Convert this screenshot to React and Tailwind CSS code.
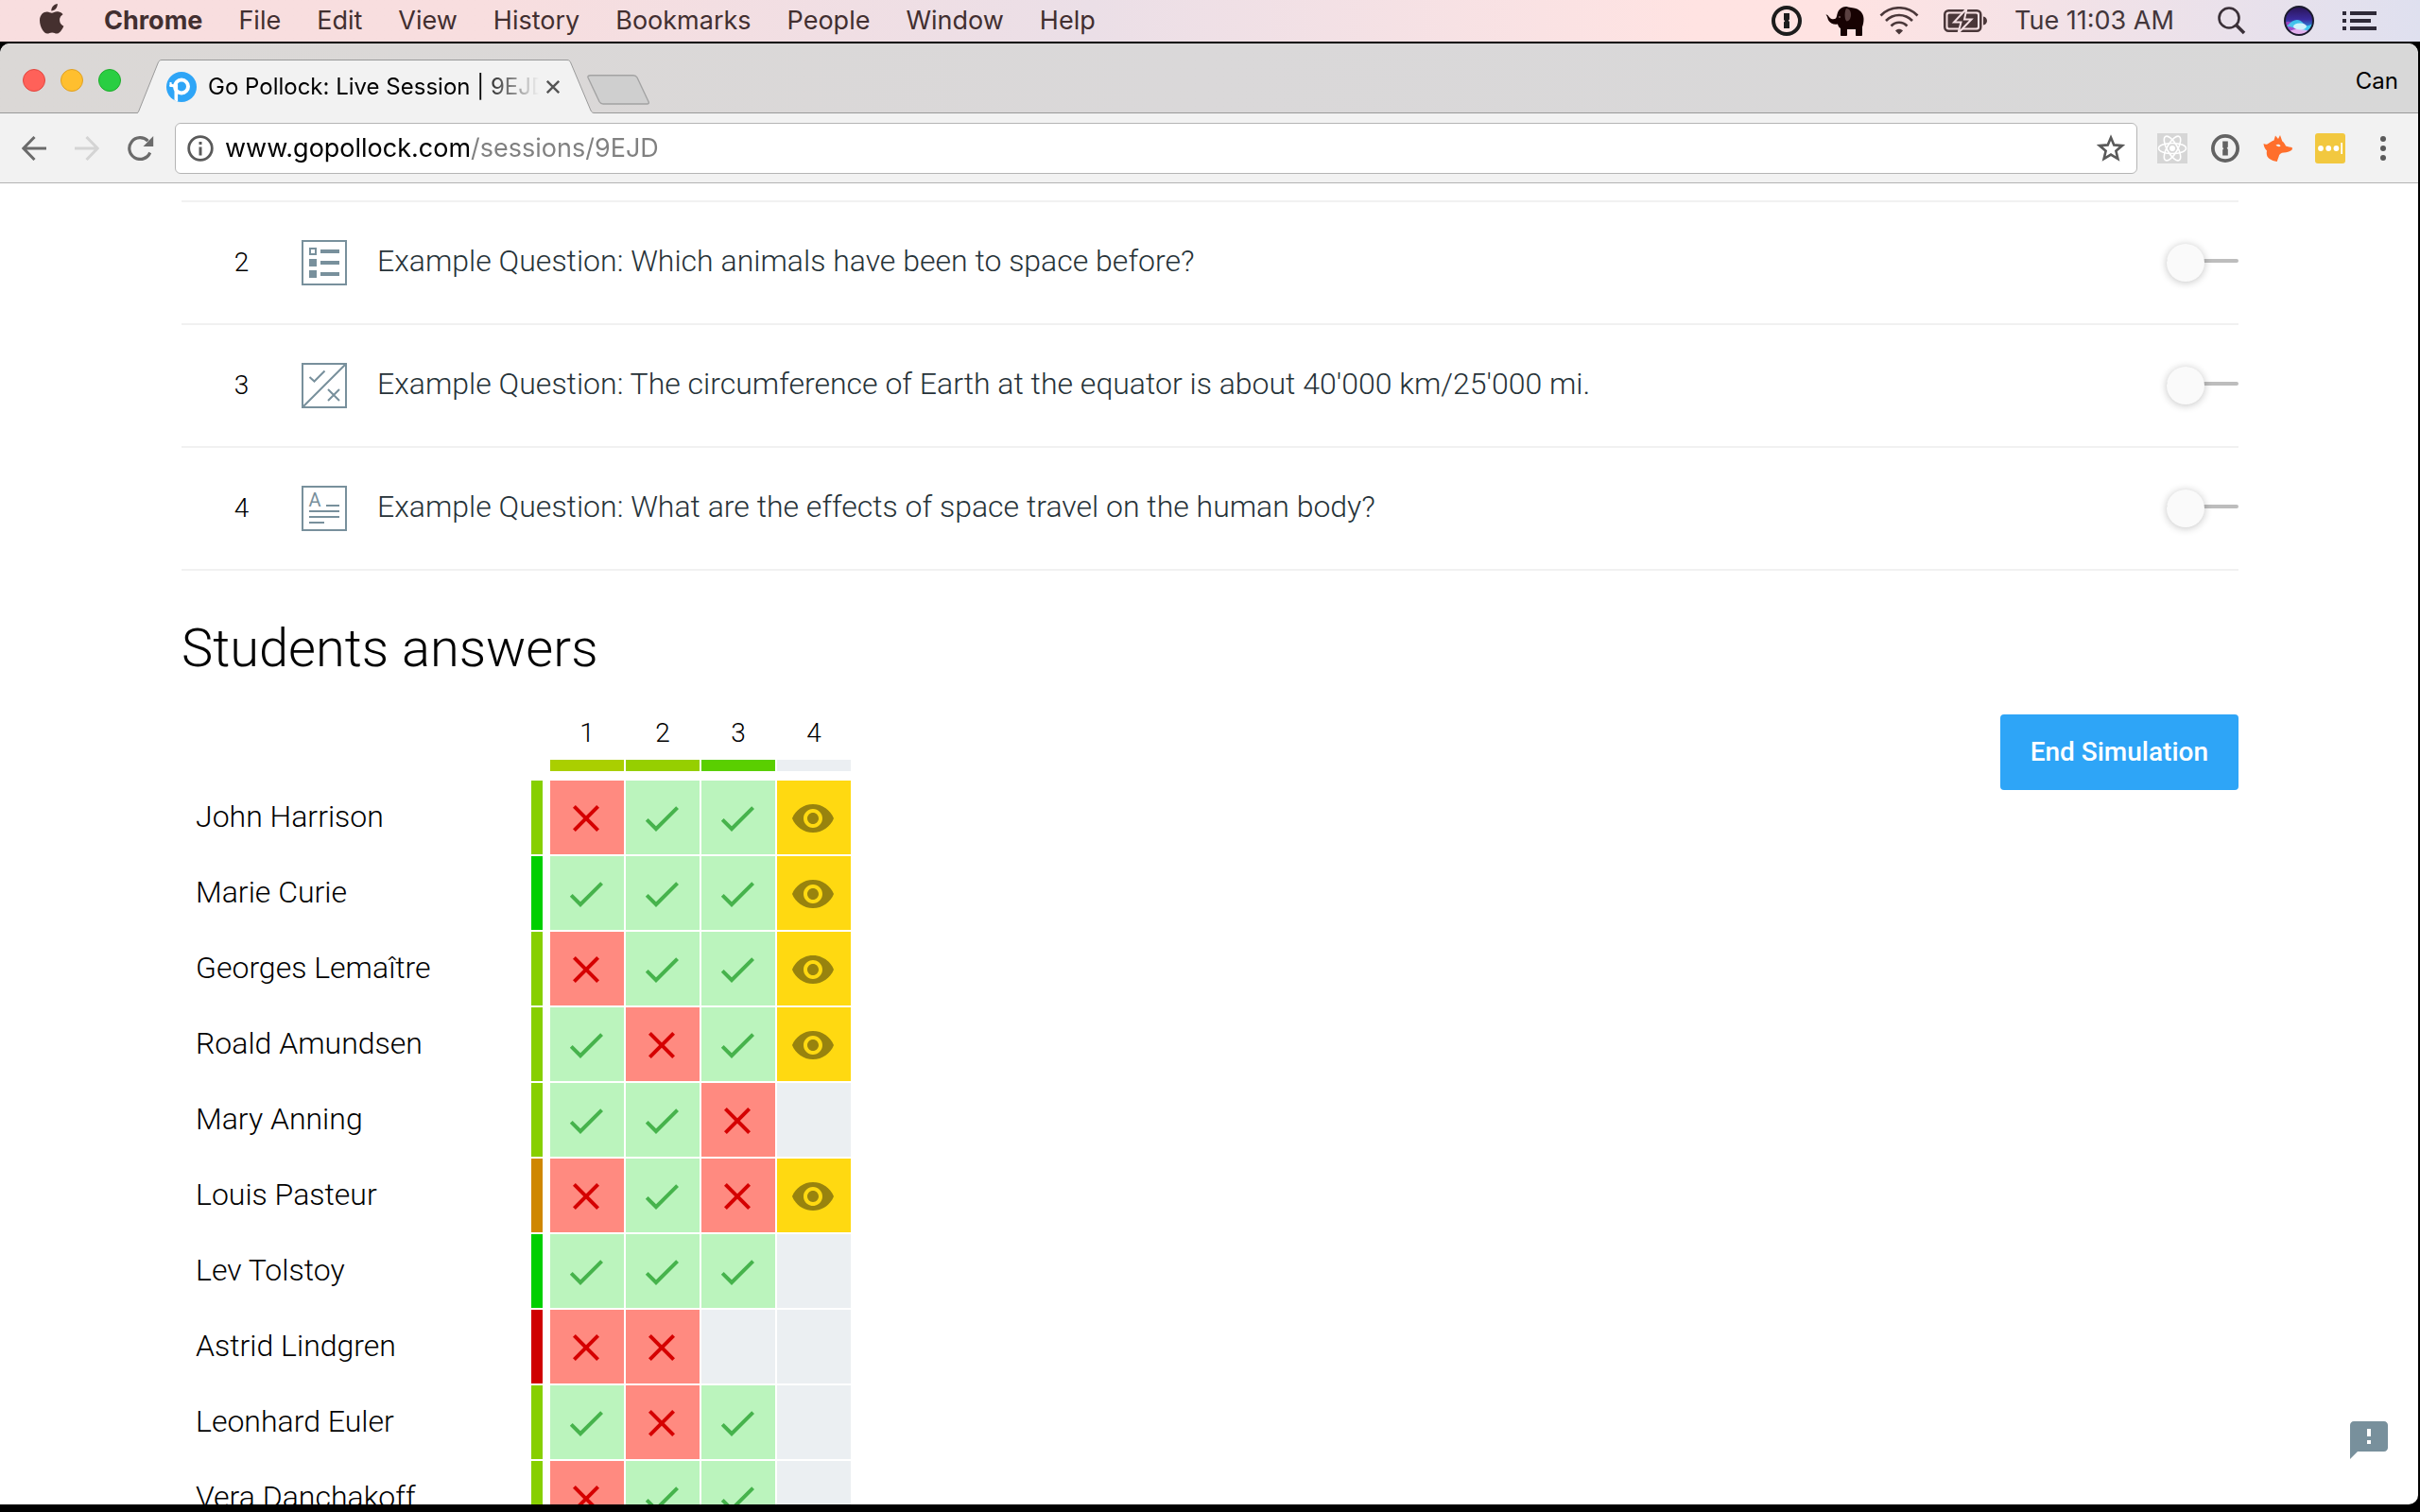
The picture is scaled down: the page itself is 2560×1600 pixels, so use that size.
import React from "react";

const MENUS = ["File", "Edit", "View", "History", "Bookmarks", "People", "Window", "Help"];

const QUESTIONS = [
  { number: 2, kind: "choice", text: "Example Question: Which animals have been to space before?" },
  { number: 3, kind: "truefalse", text: "Example Question: The circumference of Earth at the equator is about 40'000 km/25'000 mi." },
  { number: 4, kind: "text", text: "Example Question: What are the effects of space travel on the human body?" },
];

const COLUMNS = [
  { number: 1, bar: "bg-[#aacf00]" },
  { number: 2, bar: "bg-[#96cf00]" },
  { number: 3, bar: "bg-[#5acf00]" },
  { number: 4, bar: "bg-[#ebeff2]" },
];

/* One letter per cell: c correct, w wrong, s submitted, - no answer. */
const STUDENTS = [
  { name: "John Harrison", bar: "bg-[#87cf00]", answers: "wccs" },
  { name: "Marie Curie", bar: "bg-[#00cf00]", answers: "cccs" },
  { name: "Georges Lemaître", bar: "bg-[#87cf00]", answers: "wccs" },
  { name: "Roald Amundsen", bar: "bg-[#87cf00]", answers: "cwcs" },
  { name: "Mary Anning", bar: "bg-[#87cf00]", answers: "ccw-" },
  { name: "Louis Pasteur", bar: "bg-[#cf8700]", answers: "wcws" },
  { name: "Lev Tolstoy", bar: "bg-[#00cf00]", answers: "ccc-" },
  { name: "Astrid Lindgren", bar: "bg-[#cf0000]", answers: "ww--" },
  { name: "Leonhard Euler", bar: "bg-[#87cf00]", answers: "cwc-" },
  { name: "Vera Danchakoff", bar: "bg-[#87cf00]", answers: "wcc-" },
];

function AppleIcon() {
  return (
    <svg viewBox="0 0 26 32" className="h-8 w-[26px]" fill="#45302f" aria-hidden="true">
      <path d="M18.8 0c.2 2-.6 3.900-1.800 5.300-1.200 1.400-3 2.300-4.700 2.200-.2-1.900.7-3.800 1.800-5.100C15.300 1.100 17.200.1 18.800 0z" />
      <path d="M24.600 11.200c-.2.1-3.500 2-3.500 6 0 4.600 4.100 6.200 4.200 6.200 0 .1-.6 2.200-2.200 4.400-1.300 1.900-2.700 3.800-4.900 3.800s-2.700-1.200-5.100-1.200c-2.400 0-3.200 1.200-5.100 1.200-2 0-3.500-1.800-5-3.900C1.300 25.200 0 21.300 0 17.600c0-6 3.900-9.200 7.800-9.200 2.100 0 3.800 1.300 5.100 1.300 1.200 0 3.200-1.400 5.500-1.400.9 0 4.100.1 6.200 2.900z" />
    </svg>
  );
}

function KeyholeIcon({ color, className, ring }) {
  return (
    <svg viewBox="0 0 32 32" className={className} aria-hidden="true">
      <circle cx="16" cy="16" r="14" fill="none" stroke={color} strokeWidth={ring} />
      <path fill={color} d="M13 8h6v6.500l-1.200 1.300 1.200 1.200V24h-6v-6.500l1.200-1.300-1.200-1.200z" />
    </svg>
  );
}

function ElephantIcon() {
  return (
    <svg viewBox="0 0 41 31" className="h-[31px] w-[41px]" aria-hidden="true">
      <path fill="#170202" d="M.5 8.500C2 8 3 9.500 4 11c1.500 2 4.500 3.200 7 1.500C12.500 11 12 6 15 3c2.500-2.500 6-3.500 9-2.500 2 .5 4 .7 6 1 6 .8 10.500 5.500 10.500 11.500 0 3-.5 6-1.500 8.500V30c0 .7-.5 1-1 1h-5c-.7 0-1-.4-1-1v-6h-9v6c0 .7-.5 1-1 1h-5c-.7 0-1-.4-1-1v-7c-1.500-1-2.500-2.500-3-4.500-4 .7-7.500-.5-9.500-3.500C2 12.500 2.500 10.500.5 8.500z" />
      <path fill="#5a4040" d="M22 2c3.500 0 5 3 5 6.500 0 4-2 7-4.500 7C20 14 20 5 22 2z" />
      <circle cx="15" cy="11" r="1" fill="#7a6060" />
    </svg>
  );
}

function WifiIcon() {
  return (
    <svg viewBox="0 0 42 30" className="h-[30px] w-[42px]" fill="none" stroke="#4a3739" strokeWidth="2.600" aria-hidden="true">
      <path d="M1.500 9.500C12-1.500 30-1.500 40.500 9.500" />
      <path d="M7 15c8-8 20-8 28 0" />
      <path d="M12.500 20.500c5-5 12-5 17 0" />
      <path d="M21 29.500l-4-4c2-2.200 6-2.200 8 0z" fill="#4a3739" stroke="none" />
    </svg>
  );
}

function BatteryIcon() {
  return (
    <svg viewBox="0 0 46 26" className="h-[26px] w-[46px]" aria-hidden="true">
      <rect x="1.250" y="2.250" width="38" height="21.500" rx="4" fill="none" stroke="#4a3739" strokeWidth="2.500" />
      <rect x="4.500" y="5.500" width="31.500" height="15" rx="1.500" fill="#4a3739" />
      <path d="M42 8.500c2.500.5 4 2.300 4 4.500s-1.500 4-4 4.500z" fill="#4a3739" />
      <path d="M24.500 0L11 14.500h7.500L15.500 26 29.500 11.500H22z" fill="#4a3739" stroke="#f5e0e4" strokeWidth="2" />
    </svg>
  );
}

function SearchIcon() {
  return (
    <svg viewBox="0 0 30 30" className="h-[30px] w-[30px]" fill="none" stroke="#3a3038" aria-hidden="true">
      <circle cx="12" cy="12" r="10.500" strokeWidth="2.600" />
      <path d="M19.500 19.500L28 28" strokeWidth="3.600" />
    </svg>
  );
}

function SiriIcon() {
  return (
    <svg viewBox="0 0 32 32" className="h-8 w-8" aria-hidden="true">
      <defs>
        <linearGradient id="siri-sky" x1="0" y1="0" x2="0" y2="1">
          <stop offset="0" stopColor="#2a1455" />
          <stop offset=".45" stopColor="#3a2a9c" />
          <stop offset=".7" stopColor="#2f7fd6" />
          <stop offset="1" stopColor="#8a5ad0" />
        </linearGradient>
        <clipPath id="siri-disc"><circle cx="16" cy="16" r="14.500" /></clipPath>
      </defs>
      <circle cx="16" cy="16" r="15" fill="url(#siri-sky)" />
      <g clipPath="url(#siri-disc)">
        <path d="M1 18c5-3 8 0 11 4s10 8 20 2v9H1z" fill="#c23ec8" opacity=".7" />
        <path d="M3 22c6-8 13-9 17-4s6 3 11 1c-3 7-9 9-14 7S8 22 3 22z" fill="#3fd6f5" opacity=".85" />
        <ellipse cx="17" cy="22" rx="7" ry="3.500" fill="#fff" opacity=".75" />
        <path d="M6 27c6-3 14-3 20 0l-4 4H10z" fill="#f0c8f5" opacity=".8" />
      </g>
      <circle cx="16" cy="16" r="15" fill="none" stroke="#1a1a2c" strokeWidth="2" />
    </svg>
  );
}

function ListIcon() {
  return (
    <svg viewBox="0 0 36 20" className="h-5 w-9" fill="#2e2a38" aria-hidden="true">
      <path d="M0 0h4v4H0zM8 0h28v4H8zM0 8h4v4H0zM8 8h22v4H8zM0 16h4v4H0zM8 16h28v4H8z" />
    </svg>
  );
}

function MenuBar() {
  return (
    <header className="flex h-11 shrink-0 items-center justify-between bg-linear-to-r from-[#f8dedf] from-20% via-[#ebdfe7] via-45% to-[#ffe3e2] to-70% pl-[42px] font-['Inter',sans-serif] text-[27px] leading-8 text-[#422f30]">
      <nav className="flex items-center gap-[38px]">
        <button type="button" aria-label="Apple menu" className="mr-1 -mt-1"><AppleIcon /></button>
        <button type="button" className="font-bold">Chrome</button>
        {MENUS.map((m) => (
          <button type="button" key={m}>{m}</button>
        ))}
      </nav>
      <div className="flex h-full items-center bg-linear-to-r from-[#ffe3e2] from-10% to-[#dfe0ef] pr-[46px] text-[#43363a]">
        <KeyholeIcon color="#1c1c1c" ring="4" className="h-8 w-8" />
        <span className="ml-[25px]"><ElephantIcon /></span>
        <span className="ml-4"><WifiIcon /></span>
        <span className="ml-[26px]"><BatteryIcon /></span>
        <time className="ml-[29px] w-[173px] whitespace-nowrap">Tue 11:03 AM</time>
        <button type="button" aria-label="Spotlight" className="ml-[42px]"><SearchIcon /></button>
        <button type="button" aria-label="Siri" className="ml-10"><SiriIcon /></button>
        <button type="button" aria-label="Notification Center" className="ml-[30px]"><ListIcon /></button>
      </div>
    </header>
  );
}

function Favicon() {
  return (
    <svg viewBox="0 0 32 32" className="h-8 w-8 shrink-0" aria-hidden="true">
      <defs><clipPath id="favicon-disc"><circle cx="16" cy="16" r="16" /></clipPath></defs>
      <circle cx="16" cy="16" r="16" fill="#2ea5f7" />
      <g clipPath="url(#favicon-disc)" fill="none" stroke="#fff">
        <circle cx="16" cy="15.500" r="7" strokeWidth="4" />
        <path d="M10.300 14v18" strokeWidth="3.600" />
        <path d="M4 13.500c2.500 2 5.500 1.500 7-1" strokeWidth="3" />
        <path d="M4.500 11v5" strokeWidth="2" />
      </g>
    </svg>
  );
}

function TabStrip() {
  return (
    <div className="flex h-[74px] items-end rounded-t-[10px] border-b border-[#999] bg-linear-to-r from-[#dbd8d6] via-[#dad8d9] to-[#d8d8d8]">
      <div className="flex w-[145px] gap-4 self-center pt-1 pl-6">
        <button type="button" aria-label="Close window" className="h-6 w-6 rounded-full border border-[#e2463f] bg-[#ff6159]" />
        <button type="button" aria-label="Minimize window" className="h-6 w-6 rounded-full border border-[#dfa023] bg-[#ffbf2f]" />
        <button type="button" aria-label="Zoom window" className="h-6 w-6 rounded-full border border-[#1dad2b] bg-[#29ce42]" />
      </div>
      <div className="relative -mb-px flex h-[57px] w-[484px] items-center pr-9 pl-[31px]">
        <svg viewBox="0 0 484 57" preserveAspectRatio="none" className="absolute inset-0 h-full w-full" aria-hidden="true">
          <path d="M0 57C1 56.500 1 56 2 54L22 4C23 1.500 24 .5 26 .5H455C457 .5 458 1.500 459 4L480 54C481 56 482 56.500 484 56.500V57z" fill="#f2f2f2" />
          <path d="M0 56.500C1 56.500 1 56 2 54L22 4C23 1.500 24 .5 26 .5H455C457 .5 458 1.500 459 4L480 54C481 56 482 56.500 484 56.500" fill="none" stroke="#999" />
        </svg>
        <span className="relative"><Favicon /></span>
        <span className="relative ml-3 w-[350px] overflow-hidden bg-linear-to-r from-black from-82% to-transparent to-100% bg-clip-text font-['Inter',sans-serif] text-[24px] leading-8 whitespace-nowrap text-transparent">Go Pollock: Live Session | 9EJD</span>
        <button type="button" aria-label="Close tab" className="relative ml-2">
          <svg viewBox="0 0 14 14" className="h-3.5 w-3.5" stroke="#555" strokeWidth="2.400" aria-hidden="true"><path d="M.8.8l12.400 12.400M13.200.8L.8 13.200" /></svg>
        </button>
      </div>
      <button type="button" aria-label="New tab" className="mb-2 -ml-2">
        <svg viewBox="0 0 66 32" className="h-8 w-[66px]" aria-hidden="true">
          <path d="M3.500.7H49c2 0 3 .5 4 2.300l12 25.500c.7 1.500.3 2.500-1.500 2.500H17c-2 0-3-.7-4-2.500L1.200 3.500C.4 1.700 1.300.7 3.500.7z" fill="#cfcfcf" stroke="#a3a3a3" strokeWidth="1.400" />
        </svg>
      </button>
      <button type="button" className="mr-[21px] mb-[17px] ml-auto font-['Inter',sans-serif] text-[24px] leading-8 text-black">Can</button>
    </div>
  );
}

function Toolbar() {
  return (
    <div className="flex h-[74px] items-center border-b border-[#b3b3b3] bg-[#f2f2f2] pr-[34px] pl-[23px]">
      <button type="button" aria-label="Back">
        <svg viewBox="0 0 26 26" className="h-[26px] w-[26px]" fill="none" stroke="#6b6b6b" strokeWidth="3" aria-hidden="true"><path d="M26 13H2M13.500 1L1.800 13l11.700 12" /></svg>
      </button>
      <button type="button" aria-label="Forward" className="ml-[30px]">
        <svg viewBox="0 0 26 26" className="h-[26px] w-[26px]" fill="none" stroke="#d4d4d4" strokeWidth="3" aria-hidden="true"><path d="M0 13h24M12.500 1l11.700 12-11.700 12" /></svg>
      </button>
      <button type="button" aria-label="Reload" className="ml-[30px]">
        <svg viewBox="0 0 28 26" className="h-[26px] w-7" aria-hidden="true">
          <path d="M23.700 17.500A11.400 11.400 0 1 1 21.500 5.200" fill="none" stroke="#6b6b6b" strokeWidth="3.200" />
          <path d="M27.200 0v11H16.500z" fill="#6b6b6b" />
        </svg>
      </button>
      <div className="ml-[22px] flex h-[54px] flex-1 items-center rounded-md border border-[#b5b5b5] bg-white pr-3 pl-3">
        <svg viewBox="0 0 28 28" className="h-7 w-7 shrink-0" fill="none" stroke="#5a5a5a" strokeWidth="3" aria-hidden="true">
          <circle cx="14" cy="14" r="12.300" strokeWidth="2.800" />
          <path d="M14 7v3M14 12.500v9" />
        </svg>
        <input
          type="text"
          aria-label="Address"
          defaultValue="www.gopollock.com/sessions/9EJD"
          className="ml-3 min-w-0 flex-1 bg-linear-to-r from-black from-[258px] to-[#808080] to-[258px] bg-clip-text font-['Inter',sans-serif] text-[27px] leading-9 text-transparent caret-black outline-none"
        />
        <button type="button" aria-label="Bookmark this page">
          <svg viewBox="0 0 30 29" className="h-[29px] w-[30px]" fill="none" stroke="#5a5a5a" strokeWidth="2.600" aria-hidden="true"><path d="M15 3.500l3.300 7.900 8.600.7-6.500 5.600 2 8.400-7.400-4.500-7.400 4.500 2-8.400-6.500-5.600 8.600-.7z" /></svg>
        </button>
      </div>
      <button type="button" aria-label="React developer tools" className="ml-[21px]">
        <svg viewBox="0 0 32 32" className="h-8 w-8" aria-hidden="true">
          <rect width="32" height="32" fill="#d6d6d6" />
          <g fill="none" stroke="#fff" strokeWidth="1.600">
            <ellipse cx="16" cy="16" rx="14.500" ry="5.500" />
            <ellipse cx="16" cy="16" rx="14.500" ry="5.500" transform="rotate(60 16 16)" />
            <ellipse cx="16" cy="16" rx="14.500" ry="5.500" transform="rotate(120 16 16)" />
          </g>
          <circle cx="16" cy="16" r="3" fill="#fff" />
        </svg>
      </button>
      <button type="button" aria-label="Password manager" className="ml-[25px]"><KeyholeIcon color="#636363" ring="4" className="h-[30px] w-[30px]" /></button>
      <button type="button" aria-label="Fox extension" className="ml-[25px]">
        <svg viewBox="0 0 31 28" className="h-7 w-[31px]" aria-hidden="true">
          <path fill="#ff6f2c" d="M11.500 5.500L13 .5l3 3.500L18 0l2.300 6.500c1.500 1 2.700 2.500 3.700 5 2 .7 5 1.200 6.500 1.500.7 1 .5 2-.5 3-2 1.800-5 2.300-8 2.500-3 .2-5 1.500-5.500 4.500L14.700 28c-3-.3-5.800-1.500-8-3C4 23 3.300 20 4 16.500 2 14.500.8 12.500.5 9c2 1 3 1 4.500.2 2-1 4-2.700 6.500-3.700z" />
          <path fill="#f2f2f2" d="M13.500 10.500c2-1.200 4-1 5 .8-.7 1.200-3 1.300-5-.8z" />
        </svg>
      </button>
      <button type="button" aria-label="Passwords" className="ml-6">
        <svg viewBox="0 0 32 32" className="h-8 w-8" aria-hidden="true">
          <rect width="32" height="32" rx="3" fill="#f2c83f" />
          <g fill="#fff"><circle cx="6" cy="16" r="2.900" /><circle cx="14.200" cy="16" r="2.900" /><circle cx="22.400" cy="16" r="2.900" /><path d="M27.300 10H29v12h-1.700z" /></g>
        </svg>
      </button>
      <button type="button" aria-label="Chrome menu" className="ml-[37px]">
        <svg viewBox="0 0 6 26" className="h-[26px] w-1.5" fill="#5a5a5a" aria-hidden="true"><circle cx="3" cy="3" r="3" /><circle cx="3" cy="13" r="3" /><circle cx="3" cy="23" r="3" /></svg>
      </button>
    </div>
  );
}

function QuestionIcon({ kind }) {
  return (
    <svg viewBox="0 0 48 48" className="h-12 w-12" fill="none" stroke="#78909c" strokeWidth="2" aria-hidden="true">
      <rect x="1" y="1" width="46" height="46" />
      {kind === "choice" && (
        <>
          <rect x="9" y="9" width="6" height="6" />
          <path stroke="none" fill="#78909c" d="M8 20h8v8H8zM8 32h8v8H8zM20 10h20v4H20zM20 22h20v4H20zM20 34h20v4H20z" />
        </>
      )}
      {kind === "truefalse" && <path d="M1 47L47 1M8.500 15l5 4.500 11-11M28 28l12 12M40 28L28 40" />}
      {kind === "text" && (
        <>
          <text x="7.500" y="22" fill="#78909c" stroke="none" className="font-['Roboto',sans-serif] text-[20px]">A</text>
          <path d="M26 21h14M8 27h32M8 33h32M8 39h16" />
        </>
      )}
    </svg>
  );
}

function QuestionRow({ number, kind, text }) {
  const id = `question-${number}`;
  return (
    <li className="flex h-[130px] items-center border-b-2 border-[#f1f1f1]">
      <span className="w-[127px] text-center text-[28px] leading-8 font-light text-black">{number}</span>
      <QuestionIcon kind={kind} />
      <label htmlFor={id} className="ml-8 flex-1 pb-1 text-[32px] leading-10 font-light text-[#263238]">{text}</label>
      <span className="relative flex h-10 w-[76px] items-center">
        <span className="mb-1 h-1 w-full rounded-sm bg-[#bdbdbd]" />
        <span className="absolute left-0 h-10 w-10 rounded-full bg-[#fafafa] shadow-[0_1px_8px_rgba(0,0,0,0.24)]" />
        <input id={id} type="checkbox" role="switch" className="absolute inset-0 cursor-pointer opacity-0" />
      </span>
    </li>
  );
}

const ANSWERS = {
  c: { label: "Correct", cell: "bg-[#bbf4bd]", fill: "#46b34c", d: "M9 16.170L4.830 12l-1.420 1.410L9 19 21 7l-1.410-1.410z" },
  w: { label: "Wrong", cell: "bg-[#ff8a80]", fill: "#d50000", d: "M19 6.410L17.590 5 12 10.590 6.410 5 5 6.410 10.590 12 5 17.590 6.410 19 12 13.410 17.590 19 19 17.590 13.410 12z" },
  s: { label: "Submitted", cell: "bg-[#ffd911]", fill: "#98830e", d: "M12 4.500C7 4.500 2.730 7.610 1 12c1.730 4.390 6 7.500 11 7.500s9.270-3.110 11-7.500c-1.730-4.390-6-7.500-11-7.500zM12 17c-2.760 0-5-2.240-5-5s2.240-5 5-5 5 2.240 5 5-2.240 5-5 5zm0-8c-1.660 0-3 1.340-3 3s1.340 3 3 3 3-1.340 3-3-1.340-3-3-3z" },
};

function AnswerCell({ answer }) {
  const a = ANSWERS[answer];
  return (
    <td className="p-0 pr-0.5 pb-0.5">
      <div className={`h-[78px] w-[78px] pt-4 pl-3.5 ${a ? a.cell : "bg-[#ebeff2]"}`}>
        {a && (
          <svg viewBox="0 0 24 24" className="h-12 w-12" fill={a.fill} role="img" aria-label={a.label}><path d={a.d} /></svg>
        )}
      </div>
    </td>
  );
}

function AnswerTable() {
  return (
    <table className="border-separate border-spacing-0">
      <thead>
        <tr>
          <td className="w-[370px] p-0" />
          <td className="p-0" />
          {COLUMNS.map((c) => (
            <th key={c.number} scope="col" className="p-0 pr-0.5 pb-2.5 text-[28px] leading-10 font-light">
              <div className="pb-2">{c.number}</div>
              <div className={`h-3 w-[78px] ${c.bar}`} />
            </th>
          ))}
        </tr>
      </thead>
      <tbody>
        {STUDENTS.map((s) => (
          <tr key={s.name}>
            <th scope="row" className="p-0 pb-1 pl-[15px] text-left text-[32px] leading-10 font-light">{s.name}</th>
            <td className="p-0 pr-2 pb-0.5"><div className={`h-[78px] w-3 ${s.bar}`} /></td>
            {s.answers.split("").map((a, i) => (
              <AnswerCell key={i} answer={a} />
            ))}
          </tr>
        ))}
      </tbody>
    </table>
  );
}

export default function App() {
  return (
    <div className="flex h-screen flex-col overflow-hidden bg-black pb-2">
      <MenuBar />
      <div className="mt-0.5 mr-0.5 flex min-h-0 flex-1 flex-col overflow-hidden rounded-t-[10px] rounded-br-[10px] bg-white">
        <TabStrip />
        <Toolbar />
        <main className="relative min-h-0 flex-1 overflow-hidden pr-[190px] pl-48 pt-[18px] font-['Roboto',sans-serif] text-black">
          <ul className="border-t-2 border-[#f1f1f1]">
            {QUESTIONS.map((q) => (
              <QuestionRow key={q.number} {...q} />
            ))}
          </ul>
          <h2 className="mt-11 text-[56px] leading-[76px] font-light">Students answers</h2>
          <div className="mt-8 flex items-start justify-between">
            <AnswerTable />
            <button type="button" className="h-20 rounded bg-[#2ea5f7] px-8 text-[28px] leading-8 font-medium text-white">End Simulation</button>
          </div>
          <button type="button" aria-label="Send feedback" className="absolute right-7 bottom-11">
            <svg viewBox="0 0 24 24" className="h-12 w-12" fill="#78909c" aria-hidden="true">
              <path d="M20 2H4c-1.100 0-1.990.9-1.990 2L2 22l4-4h14c1.100 0 2-.9 2-2V4c0-1.100-.9-2-2-2zm-7 12h-2v-2h2v2zm0-4h-2V6h2v4z" />
            </svg>
          </button>
        </main>
      </div>
    </div>
  );
}
